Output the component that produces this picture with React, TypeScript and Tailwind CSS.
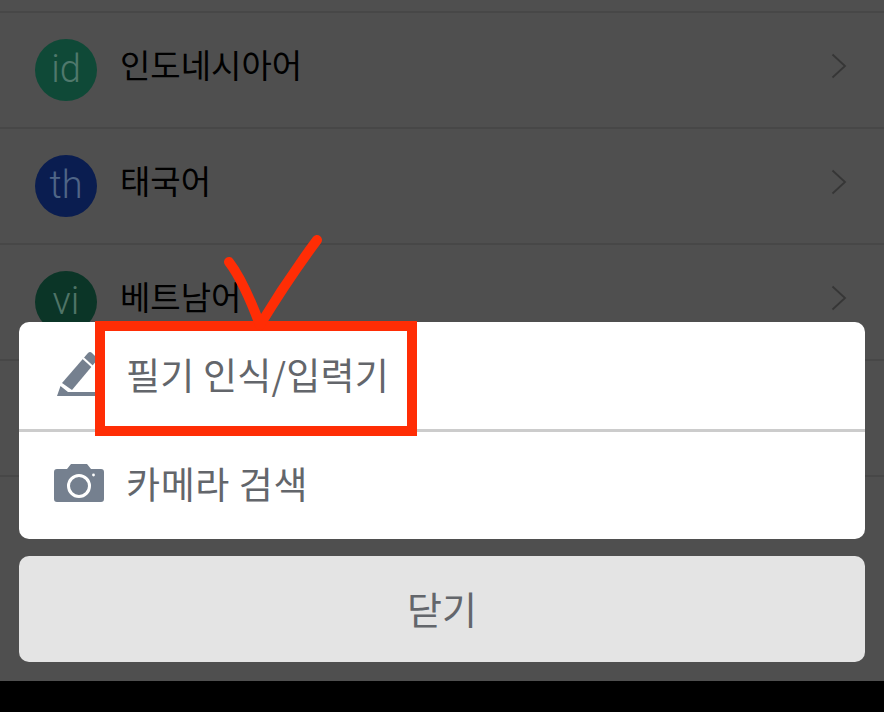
const font = { fontFamily: '"Noto Sans CJK KR", "Noto Sans", sans-serif' };

const languages = [
  { code: "id", name: "인도네시아어", circle: "bg-[#0f4937]", letter: "text-[#50786c]" },
  { code: "th", name: "태국어", circle: "bg-[#0a1d50]", letter: "text-[#4f6586]" },
  { code: "vi", name: "베트남어", circle: "bg-[#0b3527]", letter: "text-[#4f7467]" },
];

function LanguageRow({ code, name, circle, letter }: (typeof languages)[number]) {
  return (
    <div className="flex h-[116px] shrink-0 items-center border-t-2 border-[#474747] pl-[35px] pr-[37px]">
      <div className={`flex h-[62px] w-[62px] items-center justify-center rounded-full ${circle}`}>
        <span className={`-mt-[2px] text-[38px] font-light leading-none ${letter}`} style={{ fontFamily: "Roboto, sans-serif" }}>{code}</span>
      </div>
      <span className="ml-[23px] -mt-[12px] text-[33px] leading-none text-black">{name}</span>
      <svg width="16" height="26" viewBox="0 0 16 26" className="ml-auto -mt-[9px]">
        <path d="M1.5 1.5 L14 13 L1.5 24.5" fill="none" stroke="#363636" strokeWidth="1.8" />
      </svg>
    </div>
  );
}

export default function App() {
  return (
    <div className="relative flex h-[712px] w-[884px] flex-col overflow-hidden bg-black" style={font}>
      <div className="flex h-[681px] flex-col bg-[#4f4f4f] pt-[11px]">
        {languages.map((l) => (
          <LanguageRow key={l.code} {...l} />
        ))}
        <div className="h-[116px] shrink-0 border-t-2 border-[#474747]" />
        <div className="border-t-2 border-[#474747]" />
      </div>

      <div className="absolute left-[19px] top-[322px] flex w-[846px] flex-col gap-[17px]">
        <div className="overflow-hidden rounded-[10px] bg-white">
          <div className="flex h-[110px] items-center border-b-[3px] border-[#cccccc] pl-[38px]">
            <svg width="42" height="46" viewBox="0 0 42 46" className="-mt-[4px] shrink-0">
              <path fill="#75808f" d="M5 32 L31 2 Q33 0 35 2 L41 8 L15 39 Z" />
              <path fill="none" stroke="#ffffff" strokeWidth="2.2" d="M26 7 L37 17" />
              <path fill="#75808f" d="M0 45 L3.5 35 L11 41 H42 V45 Z" />
            </svg>
            <span className="ml-[27px] -mt-[3px] text-[37px] leading-none tracking-[0.2px] text-[#63666b]">필기 인식/입력기</span>
          </div>
          <div className="flex h-[107px] items-center pl-[35px]">
            <svg width="50" height="38" viewBox="0 0 50 38" className="-mt-[6px] shrink-0">
              <path fill="#75808f" d="M3 5 H13 L17 0 H33 L37 5 H47 Q50 5 50 8 V35 Q50 38 47 38 H3 Q0 38 0 35 V8 Q0 5 3 5 Z" />
              <circle cx="25" cy="22" r="10.5" fill="none" stroke="#ffffff" strokeWidth="3" />
              <circle cx="39.5" cy="11" r="1.4" fill="#ffffff" />
            </svg>
            <span className="ml-[22px] -mt-[4px] text-[37px] leading-none tracking-[0.6px] text-[#63666b]">카메라 검색</span>
          </div>
        </div>
        <div className="flex h-[106px] items-center justify-center rounded-[10px] bg-[#e4e4e4]">
          <span className="-mt-[2px] text-[38px] leading-none text-[#63666b]">닫기</span>
        </div>
      </div>

      {/* hand drawn annotation on top of the screenshot */}
      <div className="absolute left-[95px] top-[321px] h-[115px] w-[322px] border-[10px] border-[#ff2d05]" />
      <svg className="absolute left-[215px] top-[225px]" width="115" height="110" viewBox="0 0 115 110">
        <path d="M14 37 C24 50 36 76 45 100 C62 72 82 42 102 15" fill="none" stroke="#ff2d05" strokeWidth="10" strokeLinecap="round" strokeLinejoin="round" />
      </svg>
    </div>
  );
}
